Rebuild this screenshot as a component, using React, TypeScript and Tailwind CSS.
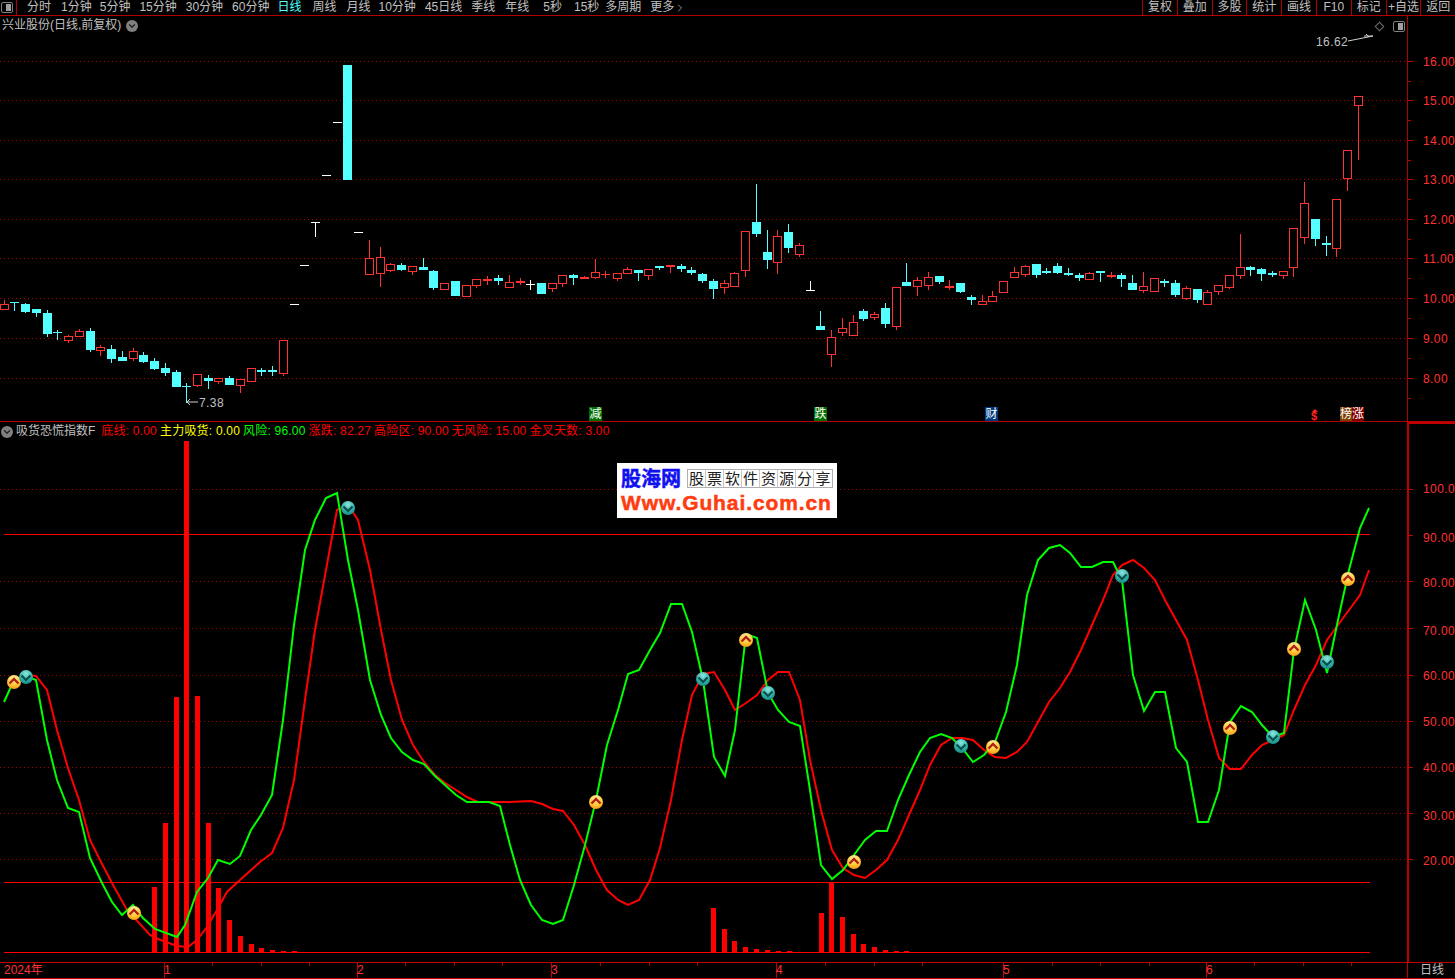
import { ChevronDown, ChevronRight } from "lucide-react";

const RED = "#ff3232";
const CYAN = "#54ffff";

// x, body top, body bottom, wick top, wick bottom, kind (r hollow, f solid red, c cyan, w white)
type Candle = [number, number, number, number, number, string];

const candles: Candle[] = [
  [4, 304, 310, 300, 310, "r"], [14, 302, 303, 302, 311, "c"], [25, 304, 312, 303, 313, "c"], [36, 309, 313, 309, 317, "c"],
  [47, 313, 334, 310, 337, "c"], [57, 332, 333, 330, 340, "c"], [68, 336, 341, 335, 343, "r"], [79, 331, 337, 329, 337, "r"],
  [90, 331, 350, 328, 352, "c"], [100, 347, 351, 345, 356, "r"], [111, 349, 359, 345, 363, "c"], [122, 357, 361, 351, 361, "c"],
  [133, 351, 359, 348, 361, "r"], [143, 355, 362, 352, 363, "c"], [154, 361, 369, 358, 370, "c"], [165, 368, 373, 363, 376, "c"],
  [176, 372, 387, 370, 387, "c"], [186, 386, 387, 383, 403, "c"], [197, 374, 386, 374, 387, "r"], [208, 378, 381, 375, 389, "c"],
  [218, 378, 382, 378, 384, "r"], [229, 378, 385, 376, 385, "c"], [240, 379, 386, 379, 393, "r"], [251, 368, 382, 368, 382, "r"],
  [261, 370, 372, 368, 376, "c"], [272, 370, 372, 366, 376, "c"], [283, 340, 374, 340, 376, "r"], [294, 304, 305, 304, 305, "w"],
  [304, 265, 266, 265, 266, "w"], [315, 222, 223, 222, 237, "w"], [326, 175, 176, 175, 176, "w"], [337, 122, 123, 122, 123, "w"],
  [347, 65, 180, 65, 180, "c"], [358, 232, 233, 232, 233, "w"], [369, 258, 275, 240, 275, "r"], [380, 257, 274, 247, 287, "r"],
  [390, 264, 271, 263, 272, "r"], [401, 265, 270, 263, 271, "c"], [412, 266, 272, 266, 275, "r"], [423, 267, 270, 258, 270, "c"],
  [433, 271, 288, 270, 290, "c"], [444, 283, 290, 283, 290, "r"], [455, 281, 296, 281, 296, "c"], [466, 285, 297, 285, 297, "r"],
  [476, 279, 286, 279, 288, "r"], [487, 279, 281, 276, 285, "f"], [498, 278, 281, 275, 285, "c"], [509, 282, 288, 275, 288, "r"],
  [520, 281, 283, 278, 285, "f"], [530, 284, 285, 280, 290, "w"], [541, 283, 294, 283, 294, "c"], [552, 283, 289, 283, 292, "r"],
  [562, 275, 284, 275, 287, "r"], [573, 275, 278, 274, 285, "c"], [584, 277, 279, 276, 279, "f"], [595, 272, 278, 259, 279, "r"],
  [605, 274, 275, 271, 278, "f"], [617, 273, 279, 273, 281, "r"], [627, 269, 274, 267, 274, "r"], [638, 270, 273, 270, 281, "c"],
  [648, 269, 276, 269, 280, "r"], [659, 266, 268, 266, 270, "c"], [670, 265, 267, 265, 273, "f"], [681, 266, 269, 264, 272, "c"],
  [691, 270, 273, 267, 275, "c"], [702, 274, 281, 273, 283, "c"], [713, 281, 289, 279, 299, "c"], [724, 283, 288, 280, 294, "r"],
  [734, 273, 287, 272, 287, "r"], [745, 231, 271, 231, 277, "r"], [756, 222, 234, 184, 237, "c"], [767, 252, 260, 230, 269, "c"],
  [777, 236, 263, 230, 274, "r"], [788, 232, 248, 224, 253, "c"], [799, 245, 255, 243, 257, "r"], [810, 290, 291, 281, 291, "w"],
  [820, 326, 330, 311, 330, "c"], [831, 337, 355, 330, 367, "r"], [842, 328, 333, 318, 336, "r"], [853, 322, 336, 315, 336, "r"],
  [863, 311, 319, 309, 321, "c"], [874, 314, 318, 312, 320, "r"], [885, 308, 324, 303, 328, "c"], [896, 287, 327, 287, 330, "r"],
  [906, 282, 286, 263, 286, "c"], [917, 280, 287, 277, 296, "r"], [928, 277, 286, 272, 290, "r"], [939, 276, 282, 276, 284, "c"],
  [949, 286, 288, 280, 290, "f"], [960, 283, 292, 283, 293, "c"], [971, 297, 300, 295, 305, "c"], [982, 301, 305, 295, 305, "r"],
  [992, 296, 302, 291, 302, "r"], [1003, 281, 293, 281, 293, "r"], [1014, 272, 278, 267, 278, "r"], [1025, 266, 275, 265, 277, "r"],
  [1036, 264, 275, 264, 278, "c"], [1046, 271, 273, 268, 274, "c"], [1057, 266, 273, 263, 274, "c"], [1068, 273, 275, 268, 276, "c"],
  [1079, 275, 278, 273, 281, "c"], [1089, 273, 280, 272, 280, "r"], [1100, 271, 273, 271, 282, "c"], [1111, 275, 277, 272, 278, "f"],
  [1121, 275, 279, 273, 287, "c"], [1132, 283, 290, 275, 290, "c"], [1143, 286, 291, 272, 293, "r"], [1154, 278, 292, 278, 292, "r"],
  [1164, 281, 283, 279, 287, "c"], [1175, 283, 295, 280, 297, "c"], [1186, 288, 299, 286, 300, "r"], [1197, 289, 300, 289, 303, "c"],
  [1207, 292, 305, 290, 305, "r"], [1218, 285, 292, 285, 295, "r"], [1229, 275, 288, 275, 289, "r"], [1240, 267, 276, 234, 279, "r"],
  [1250, 267, 270, 266, 276, "c"], [1261, 269, 274, 268, 281, "c"], [1272, 273, 275, 271, 277, "c"], [1283, 271, 276, 271, 279, "r"],
  [1293, 228, 268, 228, 277, "r"], [1304, 203, 238, 182, 244, "r"], [1315, 219, 239, 219, 246, "c"], [1326, 243, 245, 236, 256, "c"],
  [1336, 199, 249, 199, 257, "r"], [1347, 150, 179, 150, 191, "r"], [1358, 96, 106, 96, 160, "r"],
];

const green = "4,702 14,680 25,676 36,680 47,740 57,780 68,808 79,812 90,858 102,883 112,902 122,915 133,905 143,918 155,929 177,937 185,925 197,892 208,878 218,860 230,864 240,856 251,830 261,815 272,795 283,720 294,625 305,550 315,520 326,498 337,493 348,560 358,610 370,680 381,715 391,738 402,752 413,760 424,764 435,776 445,785 456,795 467,802 478,802 489,802 500,806 510,845 520,880 531,905 542,920 553,924 563,920 574,885 585,845 596,800 607,745 618,710 628,674 639,670 650,650 660,633 671,604 682,604 692,632 703,680 714,757 725,776 735,730 746,634 757,638 768,693 778,710 789,722 800,726 810,790 821,865 832,879 843,870 854,855 865,840 876,831 887,831 898,800 909,775 920,752 930,738 941,734 952,738 962,748 973,762 984,755 995,742 1006,712 1017,665 1027,595 1038,560 1049,548 1060,545 1070,553 1081,567 1092,567 1103,562 1113,562 1122,580 1133,675 1144,711 1155,692 1165,692 1176,748 1187,762 1198,822 1208,822 1219,790 1230,722 1241,706 1252,712 1262,725 1273,737 1284,733 1294,650 1305,600 1316,630 1327,673 1338,620 1349,570 1360,528 1369,508";

const redLine = "14,682 25,675 36,676 47,690 57,730 68,768 79,800 90,840 100,860 112,883 127,910 150,935 158,939 177,946 188,947 197,940 207,927 217,910 227,892 240,880 260,862 272,853 283,828 294,780 305,700 315,630 326,570 337,510 348,505 358,520 370,570 381,630 391,680 402,720 413,745 424,762 435,775 445,783 456,790 467,797 478,802 489,802 510,802 531,801 542,804 553,809 563,811 574,825 585,845 596,870 607,890 618,900 628,905 639,900 650,880 660,848 671,800 682,740 692,695 703,674 714,672 725,690 735,710 746,703 757,695 768,680 778,672 789,672 800,700 810,760 821,810 832,850 843,868 854,875 865,878 876,870 887,860 898,840 909,815 920,790 930,765 941,745 952,738 962,738 973,740 984,750 995,757 1006,758 1017,752 1027,742 1038,722 1049,702 1060,688 1070,672 1081,650 1092,625 1103,600 1113,575 1122,565 1133,560 1144,568 1155,580 1165,600 1176,620 1187,640 1198,680 1208,720 1219,758 1230,769 1241,769 1252,755 1262,745 1273,740 1284,735 1294,710 1305,685 1316,665 1327,640 1338,625 1349,610 1360,595 1369,570";

// x, top of bar (all stand on y=953)
const bars = [
  [154, 887], [165, 823], [176, 697], [186, 441], [197, 696], [208, 823], [218, 888], [229, 920], [240, 936], [251, 944], [261, 948], [272, 950], [283, 951], [294, 951],
  [713, 908], [724, 929], [734, 941], [745, 947], [756, 949], [767, 950], [778, 951], [789, 951],
  [821, 913], [831, 882], [842, 917], [853, 934], [863, 944], [874, 947], [885, 950], [896, 951], [906, 951],
];

const buyMarks = [[14, 682], [134, 913], [596, 802], [746, 640], [854, 862], [993, 747], [1230, 728], [1294, 649], [1348, 579]];
const sellMarks = [[26, 677], [348, 508], [703, 679], [768, 693], [961, 746], [1122, 576], [1273, 737], [1327, 662]];

const upperGrid = [61, 100, 140, 179, 219, 258, 298, 338, 378];
const upperLabels = ["16.00", "15.00", "14.00", "13.00", "12.00", "11.00", "10.00", "9.00", "8.00"];
const lowerGrid = [489, 581, 628, 675, 721, 767, 813, 859];
// tick y, label y, label
const lowerTicks: [number, number, string][] = [
  [489, 488, "100.0"], [535, 537, "90.00"], [581, 582, "80.00"], [628, 630, "70.00"], [675, 675, "60.00"],
  [721, 721, "50.00"], [767, 767, "40.00"], [813, 815, "30.00"], [859, 860, "20.00"],
];

const periods = [
  { label: "分时", cls: "ml-[1px]" }, { label: "1分钟", cls: "ml-[1px]" }, { label: "5分钟", cls: "-ml-[1px]" }, { label: "15分钟" }, { label: "30分钟" }, { label: "60分钟" },
  { label: "日线", cls: "-ml-[1px] text-[#54ffff]" }, { label: "周线", cls: "ml-[2px]" }, { label: "月线", cls: "ml-[1px]" }, { label: "10分钟", cls: "-ml-[1px]" }, { label: "45日线" }, { label: "季线" },
  { label: "年线", cls: "ml-[1px]" }, { label: "5秒", cls: "ml-[5px]" }, { label: "15秒", cls: "ml-[3px]" }, { label: "多周期", cls: "-ml-[3px]" },
];

const rightButtons = ["复权", "叠加", "多股", "统计", "画线", "F10", "标记", "+自选", "返回"];

const legend = [
  { name: "底线", value: "0.00", cls: "text-[#ff0000]" },
  { name: "主力吸货", value: "0.00", cls: "text-[#ffff00]" },
  { name: "风险", value: "96.00", cls: "text-[#00ff00]" },
  { name: "涨跌", value: "82.27", cls: "text-[#ff0000]" },
  { name: "高险区", value: "90.00", cls: "text-[#ff0000]" },
  { name: "无风险", value: "15.00", cls: "text-[#ff0000]" },
  { name: "金叉天数", value: "3.00", cls: "text-[#ff0000]" },
];

const timeSegments = [
  { label: "2024年", w: "w-[164px]" },
  { label: "1", w: "w-[193px]" },
  { label: "2", w: "w-[194px]" },
  { label: "3", w: "w-[225px]" },
  { label: "4", w: "w-[227px]" },
  { label: "5", w: "w-[203px]" },
  { label: "6", w: "w-[201px]" },
];

const CandleMark = ({ c }: { c: Candle }) => {
  const [x, top, bot, wTop, wBot, kind] = c;
  const color = kind === "c" ? CYAN : kind === "w" ? "#ffffff" : RED;
  return (
    <g>
      <rect x={x} y={wTop} width={1} height={wBot - wTop} fill={color} />
      {kind === "r" ? (
        <rect x={x - 3.5} y={top + 0.5} width={8} height={bot - top - 1} fill="#000" stroke={color} />
      ) : (
        <rect x={x - 4} y={top} width={9} height={bot - top} fill={color} />
      )}
    </g>
  );
};

const GridLine = ({ y }: { y: number }) => (
  <line x1={0} x2={1407} y1={y + 0.5} y2={y + 0.5} stroke="#b00000" strokeDasharray="1 3" />
);

const MiniToggle = () => (
  <span className="flex h-[11px] w-[12px] items-center justify-end rounded-[2px] border border-[#808080] pr-[1px]">
    <span className="h-[7px] w-[5px] bg-[#a0a0a0]" />
  </span>
);

const Upper = () => (
  <div className="relative flex h-[406px] border-b border-[#b00000]">
    <svg className="block h-[405px] w-[1407px]" viewBox="0 16 1407 405" shapeRendering="crispEdges">
      {upperGrid.map((y) => <GridLine key={y} y={y} />)}
      {candles.map((c) => <CandleMark key={c[0]} c={c} />)}
      <g shapeRendering="auto" stroke="#d0d0d0" fill="none">
        <path d="M1348 41 L1373 36 M1373 36 L1364 36 M1366 34 L1369 37" />
        <path d="M187 402 L198 402 M187 402 L190 399 M187 402 L190 405" />
      </g>
    </svg>
    <div className="flex-1 border-l border-[#b00000]">
      <svg className="block h-[405px] w-full" viewBox="1408 16 47 405">
        {upperGrid.map((y, i) => (
          <g key={y}>
            <rect x={1408} y={y} width={5} height={1} fill="#c00000" />
            <rect x={1408} y={y + 20} width={3} height={1} fill="#c00000" />
            <text x={1423} y={y + 5} fontSize={12} fill={RED} fontFamily="'Liberation Sans',sans-serif" letterSpacing={0.4}>{upperLabels[i]}</text>
          </g>
        ))}
      </svg>
    </div>

    <div className="absolute left-[2px] top-[2px] flex items-center gap-[5px] text-[12px] leading-[15px] text-[#c0c0c0]">
      <span>兴业股份(日线,前复权)</span>
      <span className="flex h-[12px] w-[12px] items-center justify-center rounded-full bg-[#808080]">
        <ChevronDown size={10} strokeWidth={3} color="#222" />
      </span>
    </div>

    <div className="absolute left-[1376px] top-[5px] flex items-center gap-[10px]">
      <span className="h-[7px] w-[7px] rotate-45 border border-[#707070]" />
      <MiniToggle />
    </div>
    <span className="absolute left-[1316px] top-[19px] text-[12px] leading-[15px] tracking-[0.4px] text-[#c0c0c0]">16.62</span>
    <span className="absolute left-[199px] top-[380px] text-[12px] leading-[15px] tracking-[0.4px] text-[#c0c0c0]">7.38</span>

    <span className="absolute left-[589px] top-[391px] h-[14px] w-[13px] bg-[#007000] text-center text-[12px] leading-[14px] text-white">减</span>
    <span className="absolute left-[814px] top-[391px] h-[14px] w-[13px] bg-[#007000] text-center text-[12px] leading-[14px] text-white">跌</span>
    <span className="absolute left-[985px] top-[391px] h-[14px] w-[13px] bg-[#003a80] text-center text-[12px] leading-[14px] text-white">财</span>
    <span className="absolute left-[1312px] top-[393px] h-0 w-0 border-x-[3px] border-b-[3px] border-x-transparent border-b-[#ff2020]" />
    <span className="absolute left-[1311px] top-[394px] text-[11px] font-bold leading-[12px] text-[#ff2020]">$</span>
    <div className="absolute left-[1340px] top-[391px] flex text-[12px] leading-[14px] text-white">
      <span className="w-[12px] bg-[#804000] text-center">榜</span>
      <span className="w-[12px] bg-[#800000] text-center">涨</span>
    </div>
  </div>
);

const Lower = () => (
  <div className="relative flex h-[540px]">
    <svg className="block h-[540px] w-[1407px]" viewBox="0 422 1407 540">
      <defs>
        <radialGradient id="buy" cx="50%" cy="25%" r="85%">
          <stop offset="0%" stopColor="#fff2a8" />
          <stop offset="55%" stopColor="#ffc838" />
          <stop offset="100%" stopColor="#f58a10" />
        </radialGradient>
        <radialGradient id="sell" cx="50%" cy="25%" r="85%">
          <stop offset="0%" stopColor="#8fe6de" />
          <stop offset="55%" stopColor="#2fb0a8" />
          <stop offset="100%" stopColor="#128078" />
        </radialGradient>
      </defs>
      <g shapeRendering="crispEdges">
        {lowerGrid.map((y) => <GridLine key={y} y={y} />)}
        {bars.map(([x, top]) => <rect key={x} x={x - 2} y={top} width={5} height={953 - top} fill="#ff0000" />)}
        {[534, 882, 952].map((y) => <rect key={y} x={4} y={y} width={1366} height={1} fill="#ff0000" />)}
      </g>
      <polyline points={redLine} fill="none" stroke="#ff0000" strokeWidth={2} />
      <polyline points={green} fill="none" stroke="#00ff00" strokeWidth={2} />
      {buyMarks.map(([x, y]) => (
        <g key={x} transform={`translate(${x} ${y})`}>
          <circle r={7} fill="url(#buy)" />
          <path d="M-4.5 1.5 L0 -3 L4.5 1.5" fill="none" stroke="#b02010" strokeWidth={2.4} />
        </g>
      ))}
      {sellMarks.map(([x, y]) => (
        <g key={x} transform={`translate(${x} ${y})`}>
          <circle r={7} fill="url(#sell)" />
          <path d="M-4.5 -1.5 L0 3 L4.5 -1.5" fill="none" stroke="#0b4f4a" strokeWidth={2.2} />
        </g>
      ))}
    </svg>
    <div className="flex-1 border-l-2 border-t-2 border-[#c00000]">
      <svg className="block h-[538px] w-full" viewBox="1409 424 46 538">
        {lowerTicks.map(([y, labelY, label]) => (
          <g key={y}>
            <rect x={1409} y={y} width={4} height={1} fill="#c00000" />
            <text x={1423} y={labelY + 5} fontSize={12} fill={RED} fontFamily="'Liberation Sans',sans-serif" letterSpacing={0.4}>{label}</text>
          </g>
        ))}
      </svg>
    </div>

    <div className="absolute left-[1px] top-[2px] flex items-center text-[12px] leading-[15px] text-[#c0c0c0]">
      <span className="flex h-[12px] w-[12px] items-center justify-center rounded-full bg-[#808080]">
        <ChevronDown size={10} strokeWidth={3} color="#222" />
      </span>
      <span className="ml-[3px] mr-[6px]">吸货恐慌指数F</span>
      <div className="flex gap-[3px] tracking-[0.2px]">
        {legend.map((l) => (
          <span key={l.name} className={l.cls}>{l.name}: {l.value}</span>
        ))}
      </div>
    </div>

    <div className="absolute left-[617px] top-[41px] flex h-[55px] w-[220px] flex-col justify-center bg-white px-[4px]">
      <div className="flex items-center justify-between">
        <span className="text-[20px] font-bold leading-[24px] text-[#1010f0] [-webkit-text-stroke:0.5px_#1010f0]">股海网</span>
        <div className="flex border border-[#b0b0b0]">
          {"股票软件资源分享".split("").map((ch, i) => (
            <span key={i} className="flex h-[17px] w-[18px] items-center justify-center border-r border-[#c8c8c8] text-[15px] leading-none text-[#202020] last:border-r-0">{ch}</span>
          ))}
        </div>
      </div>
      <span className="font-['Liberation_Sans'] text-[21px] font-bold leading-[24px] tracking-[0.9px] text-[#ff3c10] [-webkit-text-stroke:0.5px_#ff3c10]">Www.Guhai.com.cn</span>
    </div>
  </div>
);

const TimeAxis = () => (
  <div className="relative flex h-[17px] border-b border-t border-[#c00000]">
    <div className="flex w-[1407px] text-[12px] leading-[15px] text-[#ff3232]">
      {timeSegments.map((s, i) => (
        <div key={s.label} className={`${s.w} ${i > 0 ? "border-l border-[#c00000] indent-[-1px]" : "pl-[4px]"}`}>{s.label}</div>
      ))}
    </div>
    <div className="flex-1 border-l border-[#c00000] pl-[12px] text-[12px] leading-[15px] text-[#c0c0c0]">日线</div>
    <svg className="absolute left-0 top-0 h-[4px] w-[1407px]" viewBox="0 0 1407 4" shapeRendering="crispEdges">
      {[212, 261, 309, 405, 454, 502, 600, 649, 697, 825, 874, 922, 1052, 1100, 1149, 1254, 1303, 1351].map((x) => (
        <rect key={x} x={x} y={0} width={1} height={3} fill="#c00000" />
      ))}
    </svg>
  </div>
);

export default function App() {
  return (
    <div className="flex h-[979px] w-[1455px] flex-col overflow-hidden bg-black font-['Liberation_Sans','Noto_Sans_CJK_SC',sans-serif]">
      <div className="flex h-[16px] border-b border-[#b00000] text-[12px] leading-[15px] text-[#c0c0c0]">
        <div className="flex w-[17px] items-center justify-center border-r border-[#b00000] pr-[2px]">
          <MiniToggle />
        </div>
        <div className="ml-[9px] flex gap-[9px]">
          {periods.map((p) => (
            <span key={p.label} className={p.cls}>{p.label}</span>
          ))}
          <span className="flex items-center">更多<ChevronRight size={12} strokeWidth={1.5} /></span>
        </div>
        <div className="ml-auto flex w-[313px]">
          {rightButtons.map((b) => (
            <span key={b} className="w-[34.8px] border-l border-[#b00000] text-center last:w-auto last:flex-1">{b}</span>
          ))}
        </div>
      </div>
      <Upper />
      <Lower />
      <TimeAxis />
    </div>
  );
}
